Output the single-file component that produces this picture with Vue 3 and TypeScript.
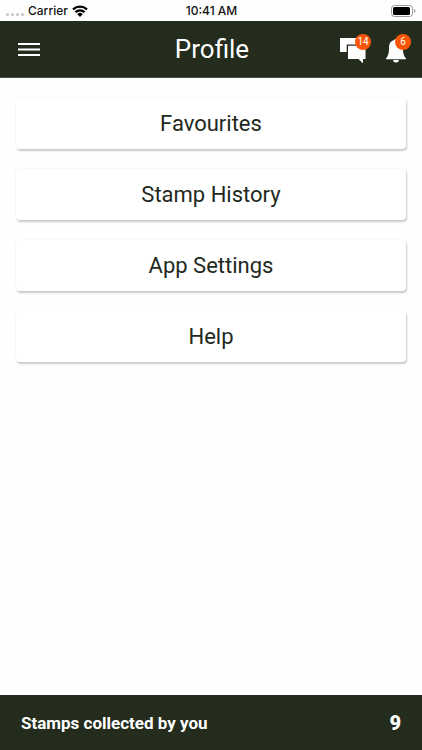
<script setup lang="ts">
const links: string[] = ['Favourites', 'Stamp History', 'App Settings', 'Help']
const messages = 14
const alerts = 6
const stamps = 9
</script>

<template>
  <div class="screen">
    <div class="status">
      <div class="carrier">
        <span class="dots"><i></i><i></i><i></i><i></i></span>
        <span>Carrier</span>
        <svg class="wifi" width="16" height="12" viewBox="0 0 16 12" aria-hidden="true">
          <path d="M1 4.400a10.200 10.200 0 0 1 14 0M3.500 7.100a6.500 6.500 0 0 1 9 0" fill="none" stroke="#000" stroke-width="2.200" />
          <path d="M8 12 5.200 9.100a4 4 0 0 1 5.600 0z" fill="#000" />
        </svg>
      </div>
      <time>10:41 AM</time>
      <svg class="battery" width="26" height="12" viewBox="0 0 26 12" aria-hidden="true">
        <rect x=".5" y=".5" width="21" height="11" rx="3" fill="none" stroke="#999" />
        <rect x="2" y="2" width="17" height="8" rx="1.500" fill="#000" />
        <path d="M23 4c1.900.5 1.900 3.500 0 4z" fill="#999" />
      </svg>
    </div>

    <header class="bar">
      <button class="icon" type="button" aria-label="Menu">
        <svg width="22" height="14" viewBox="0 0 22 14">
          <path d="M0 2h22M0 7.500h22M0 13h22" stroke="#fff" stroke-width="2" />
        </svg>
      </button>
      <h1>Profile</h1>
      <div class="actions">
        <button class="icon" type="button" aria-label="Messages">
          <svg width="26" height="28" viewBox="0 0 26 28" fill="#fff">
            <path d="M0 3h17v6.500H6.700V17H0z" />
            <path d="M8 10.700h17.500V24H23v4.500L18.500 24H8z" />
          </svg>
          <span class="badge">{{ messages }}</span>
        </button>
        <button class="icon" type="button" aria-label="Notifications">
          <svg width="20" height="28" viewBox="0 0 20 28" fill="#fff">
            <path d="M8.300 5a1.800 1.800 0 0 1 3.400 0c3.600.8 5.200 3.500 5.200 7 0 6 .9 9 3.100 11.300v1H0v-1C2.200 21 3.100 18 3.100 12c0-3.500 1.600-6.200 5.200-7z" />
            <path d="M7.200 25h5.600a2.800 2.500 0 0 1-5.600 0z" />
          </svg>
          <span class="badge">{{ alerts }}</span>
        </button>
      </div>
    </header>

    <main>
      <button v-for="link in links" :key="link" class="card" type="button">{{ link }}</button>
    </main>

    <footer>
      <span>Stamps collected by you</span>
      <strong>{{ stamps }}</strong>
    </footer>
  </div>
</template>

<style>
body {
  margin: 0;
  background: #fefefe;
}
</style>

<style scoped>
.screen {
  display: flex;
  flex-direction: column;
  min-height: 100vh;
  font-family: Roboto, sans-serif;
  color: #22291c;
}
.status {
  display: grid;
  grid-template-columns: 1fr auto 1fr;
  align-items: center;
  height: 21px;
  padding: 0 5px 0 6px;
  font: 500 12px/20px Inter, sans-serif;
  color: #111;
}
.carrier {
  display: flex;
  align-items: center;
  gap: 4px;
}
.dots {
  display: flex;
  gap: 2px;
  padding-top: 7px;
}
.dots i {
  width: 3px;
  height: 3px;
  border-radius: 50%;
  background: #c4c4c4;
}
.battery {
  justify-self: end;
}
.bar {
  display: grid;
  grid-template-columns: 1fr auto 1fr;
  align-items: center;
  box-sizing: border-box;
  height: 57px;
  padding: 0 16px 0 18px;
  background: #232c1d;
  border-bottom: 1px solid #4c5546;
  color: #fff;
}
h1 {
  margin: 0;
  font-size: 26px;
  font-weight: 400;
  line-height: 32px;
}
.icon {
  position: relative;
  display: flex;
  padding: 0;
  border: 0;
  background: none;
  justify-self: start;
}
.actions {
  display: flex;
  justify-content: flex-end;
  gap: 20px;
}
.badge {
  position: absolute;
  top: -1px;
  right: -5px;
  width: 16px;
  height: 16px;
  border-radius: 50%;
  background: #fb5607;
  color: #fff;
  font: 10px/16px Roboto, sans-serif;
  text-align: center;
}
main {
  flex: 1;
  display: flex;
  flex-direction: column;
  gap: 20px;
  padding: 20px 16px;
}
.card {
  height: 51px;
  padding: 0;
  border: 0;
  border-radius: 4px;
  background: #fff;
  box-shadow: 1px 2px 2px #cacaca, 0 0 2px #ececec;
  color: #22291c;
  font: 22px/28px Roboto, sans-serif;
}
footer {
  display: flex;
  align-items: center;
  justify-content: space-between;
  height: 55px;
  padding: 0 21px;
  background: #232c1d;
  color: #fff;
  font-size: 17px;
  font-weight: 700;
}
footer strong {
  font-size: 20px;
}
</style>
